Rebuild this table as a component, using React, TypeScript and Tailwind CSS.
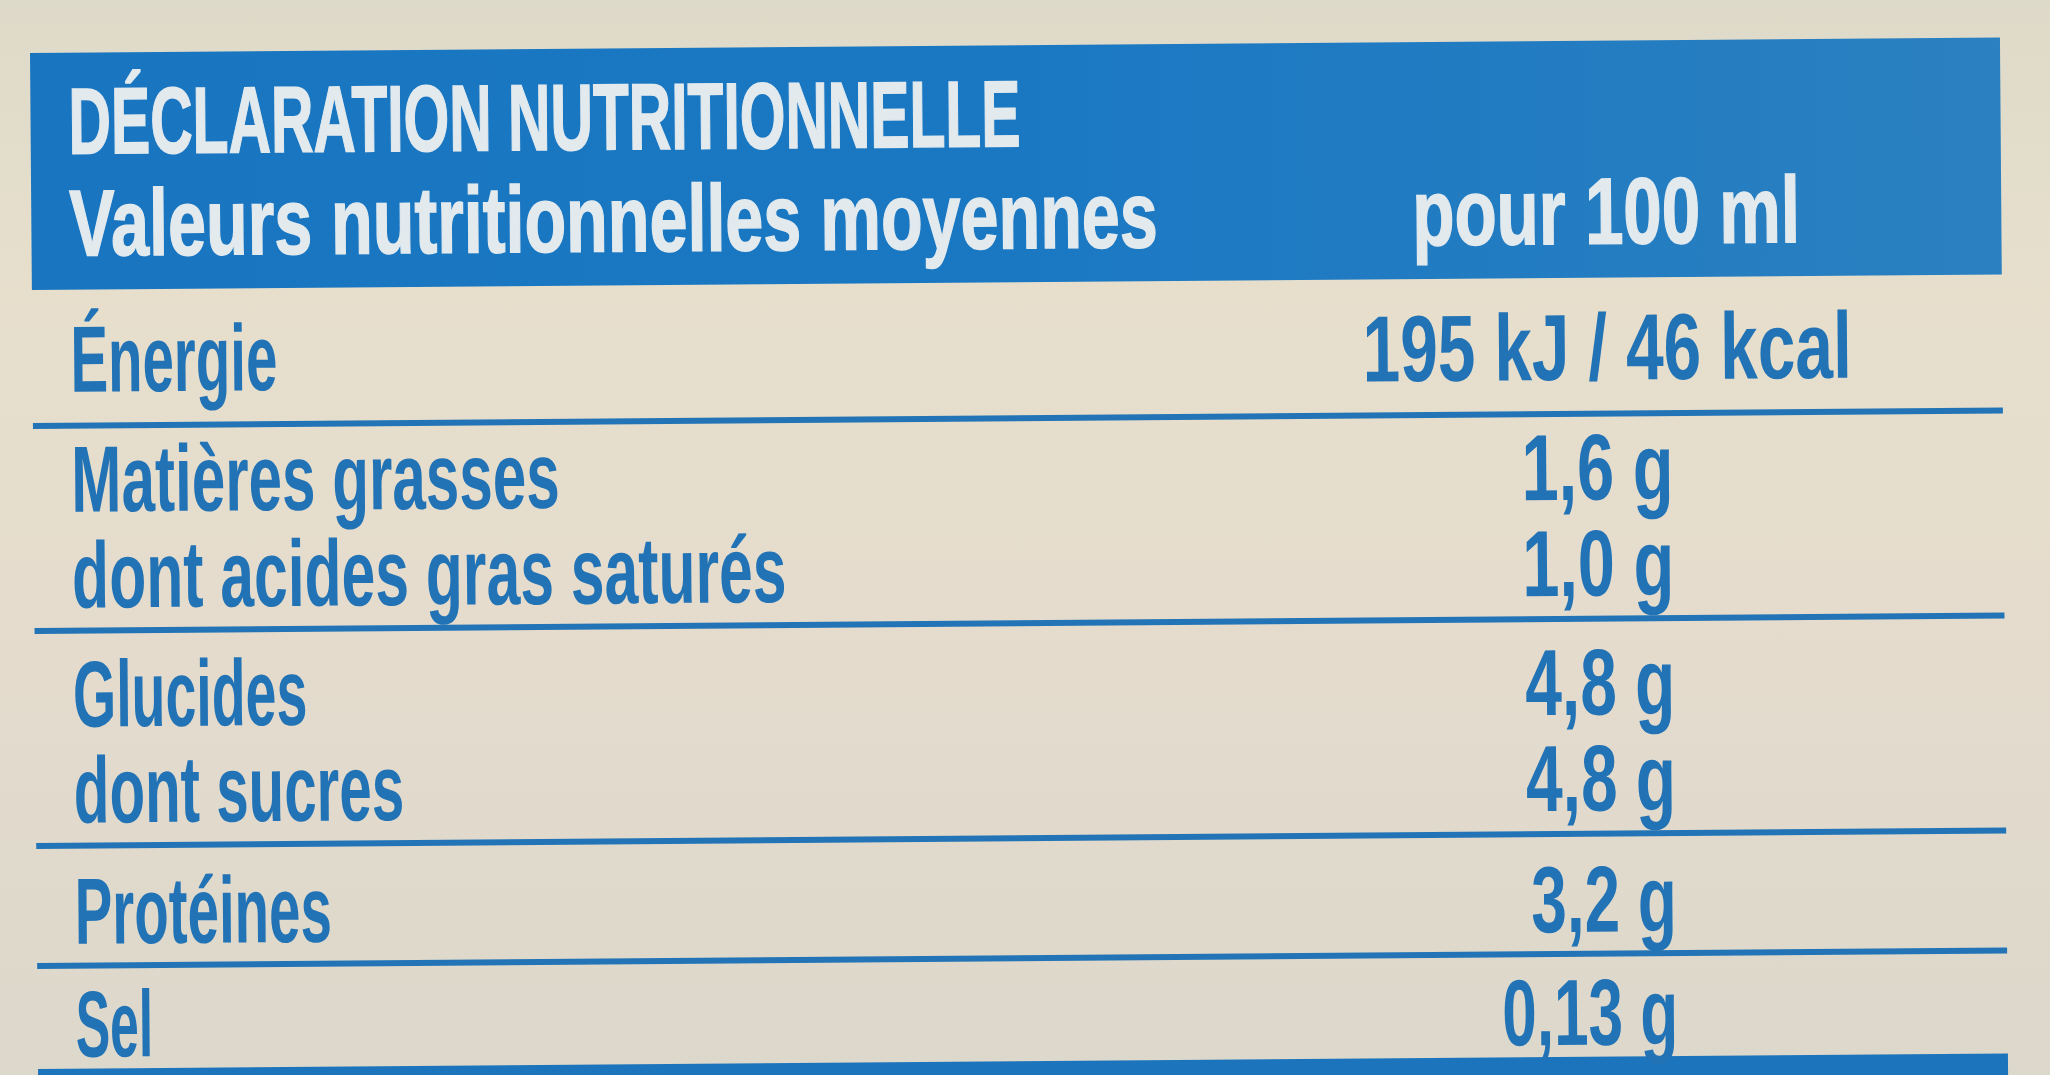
import React from "react";

type Item = {
  label: string;
  labelScale: string;
  value: string;
  valueScale: string;
  centered?: boolean;
};

type Group = { pad: string; items: Item[] };

const groups: Group[] = [
  {
    pad: "pt-[22px] pb-[15px]",
    items: [
      {
        label: "Énergie",
        labelScale: "scale-x-[0.6]",
        value: "195 kJ / 46 kcal",
        valueScale: "scale-x-[0.72]",
        centered: true,
      },
    ],
  },
  {
    pad: "pt-[3px] pb-[4px]",
    items: [
      { label: "Matières grasses", labelScale: "scale-x-[0.64]", value: "1,6 g", valueScale: "scale-x-[0.71]" },
      { label: "dont acides gras saturés", labelScale: "scale-x-[0.645]", value: "1,0 g", valueScale: "scale-x-[0.71]" },
    ],
  },
  {
    pad: "pt-[13px] pb-[4px]",
    items: [
      { label: "Glucides", labelScale: "scale-x-[0.59]", value: "4,8 g", valueScale: "scale-x-[0.7]" },
      { label: "dont sucres", labelScale: "scale-x-[0.62]", value: "4,8 g", valueScale: "scale-x-[0.7]" },
    ],
  },
  {
    pad: "pt-[15px] pb-[3px]",
    items: [{ label: "Protéines", labelScale: "scale-x-[0.6]", value: "3,2 g", valueScale: "scale-x-[0.68]" }],
  },
];

function Row({ item, leading = "leading-[96px]" }: { item: Item; leading?: string }) {
  return (
    <div className={`flex whitespace-nowrap ${leading}`}>
      <div className="w-[1425px] shrink-0 pl-[38px]">
        <span className={`inline-block origin-left ${item.labelScale}`}>{item.label}</span>
      </div>
      <div className={`flex w-[300px] shrink-0 ${item.centered ? "justify-center" : "justify-end pr-[85px]"}`}>
        <span className={`inline-block shrink-0 ${item.centered ? "origin-center" : "origin-right"} ${item.valueScale}`}>
          {item.value}
        </span>
      </div>
    </div>
  );
}

export default function App() {
  return (
    <div className="relative h-[1075px] w-[2050px] overflow-hidden bg-[linear-gradient(180deg,#dedac9_0%,#e7dfcc_28%,#e4dbcd_62%,#dcd8cb_100%)] font-['Liberation_Sans',Arial,sans-serif]">
      <div className="ml-[30px] mt-[53px] w-[1970px] origin-top-left rotate-[-0.45deg]">
        {/* blue header */}
        <div className="h-[237px] bg-linear-to-r from-[#1975c0] via-[#1a78c3] to-[#2a80c0] pt-[18px] text-[94px] font-bold leading-[102px] text-[#e3eaee] [-webkit-text-stroke:1.5px_#e3eaee]">
          <div className="whitespace-nowrap pl-[38px]">
            <span className="inline-block origin-left scale-x-[0.625]">DÉCLARATION NUTRITIONNELLE</span>
          </div>
          <div className="flex whitespace-nowrap">
            <div className="w-[1425px] shrink-0 pl-[38px]">
              <span className="inline-block origin-left scale-x-[0.726]">Valeurs nutritionnelles moyennes</span>
            </div>
            <div className="flex w-[300px] shrink-0 justify-center">
              <span className="inline-block shrink-0 origin-center scale-x-[0.735]">pour 100 ml</span>
            </div>
          </div>
        </div>

        {/* nutrient rows */}
        <div className="text-[94px] font-bold text-[#2273b6]">
          {groups.map((g, i) => (
            <div key={i} className={`border-b-[6px] border-[#2274b6] ${g.pad}`}>
              {g.items.map((item) => (
                <Row key={item.label} item={item} />
              ))}
            </div>
          ))}
          <div className="pt-[12px]">
            <Row
              item={{ label: "Sel", labelScale: "scale-x-[0.55]", value: "0,13 g", valueScale: "scale-x-[0.66]" }}
              leading="leading-[88px]"
            />
          </div>
          <div className="h-[30px] bg-[#1c74bc]" />
        </div>
      </div>
    </div>
  );
}
